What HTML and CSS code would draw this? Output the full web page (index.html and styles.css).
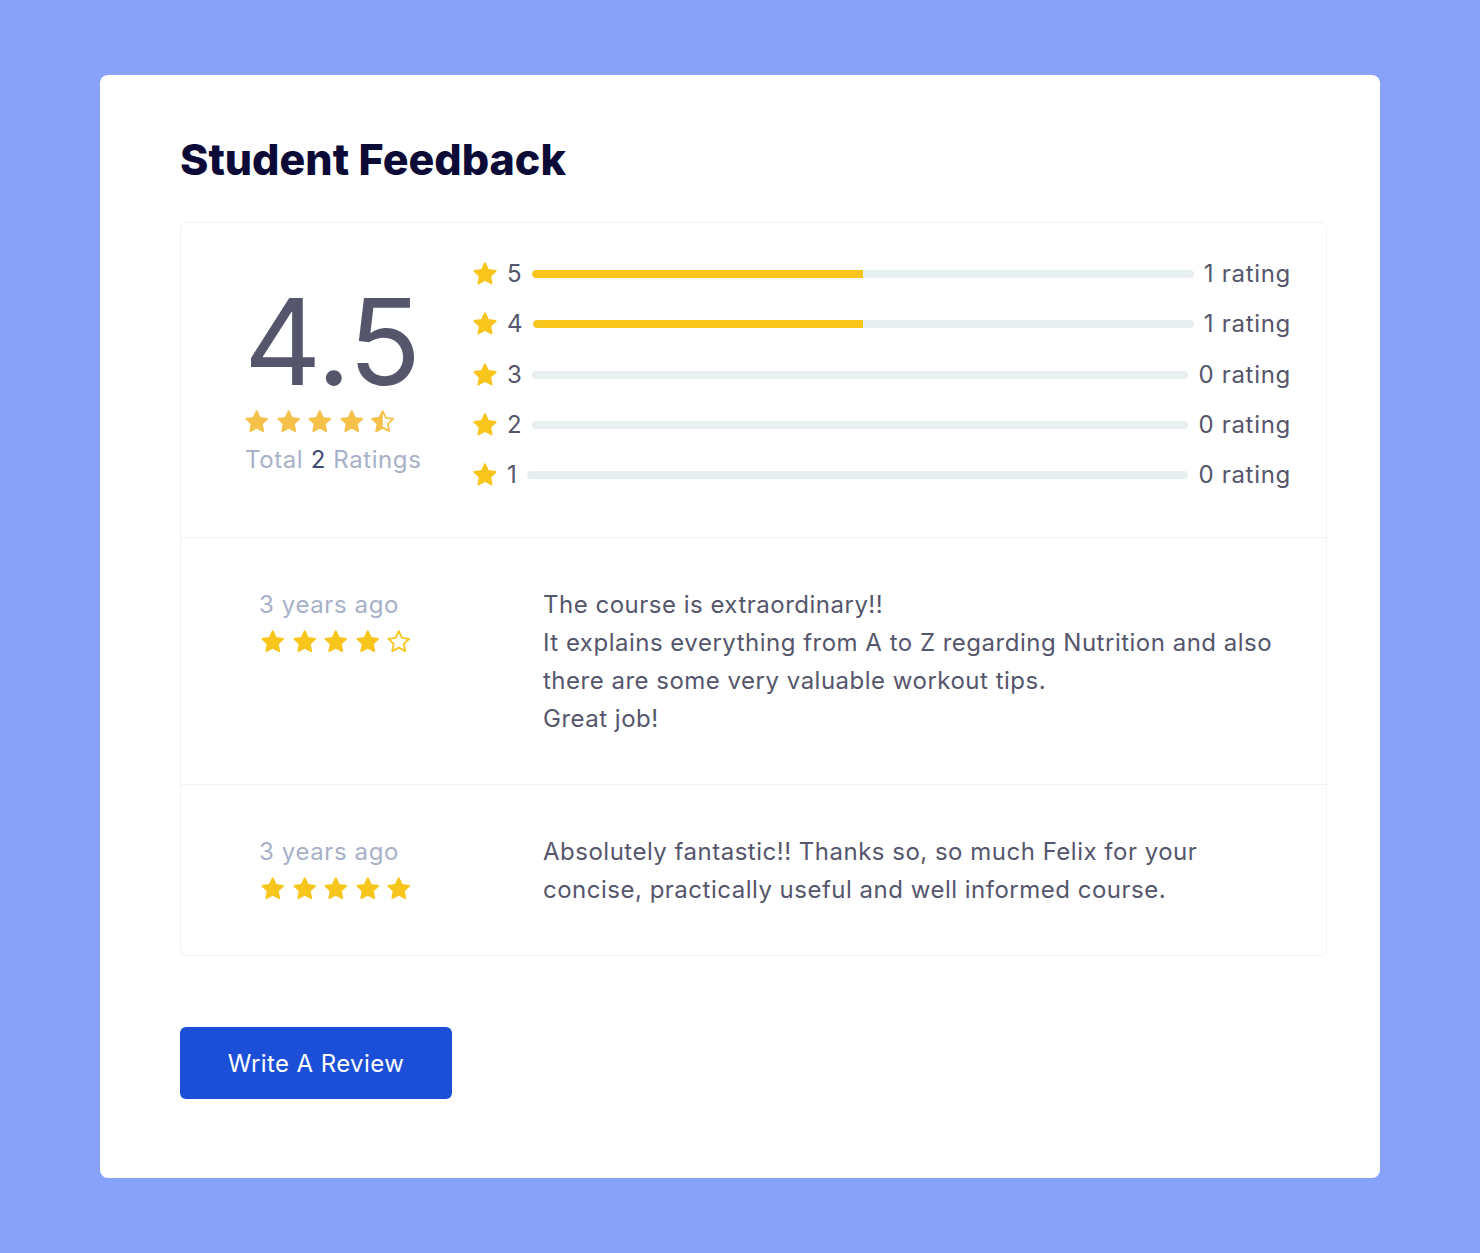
FILE: index.html
```html
<!DOCTYPE html>
<html lang="en">
<head>
<meta charset="utf-8">
<title>Student Feedback</title>
<link rel="stylesheet" href="styles.css">
</head>
<body>
<svg width="0" height="0" class="defs" aria-hidden="true">
  <defs>
    <path id="star" d="M12 2.8l2.75 5.8 6.35.85-4.650 4.4 1.2 6.3L12 17.1l-5.65 3.05 1.2-6.3L2.9 9.45l6.35-.85z"/>
    <clipPath id="half"><rect x="0" y="0" width="12" height="24"/></clipPath>
  </defs>
</svg>
<main class="card">
  <h1 class="title">Student Feedback</h1>
  <section class="box">
    <div class="summary">
      <div class="avg">
        <div class="avg-num">4.5</div>
        <div class="stars stars-soft">
          <svg class="star" viewBox="0 0 24 24"><use href="#star" class="full"/></svg>
          <svg class="star" viewBox="0 0 24 24"><use href="#star" class="full"/></svg>
          <svg class="star" viewBox="0 0 24 24"><use href="#star" class="full"/></svg>
          <svg class="star" viewBox="0 0 24 24"><use href="#star" class="full"/></svg>
          <svg class="star" viewBox="0 0 24 24"><use href="#star" class="empty"/><use href="#star" class="full" clip-path="url(#half)"/></svg>
        </div>
        <div class="total">Total <span class="total-num">2</span> Ratings</div>
      </div>
      <div class="bars">
        <div class="bar-row">
          <svg class="row-star" viewBox="0 0 24 24"><use href="#star" class="full"/></svg>
          <span class="row-num">5</span>
          <div class="track"><div class="fill" style="width:50%"></div></div>
          <span class="row-label">1 rating</span>
        </div>
        <div class="bar-row">
          <svg class="row-star" viewBox="0 0 24 24"><use href="#star" class="full"/></svg>
          <span class="row-num">4</span>
          <div class="track"><div class="fill" style="width:50%"></div></div>
          <span class="row-label">1 rating</span>
        </div>
        <div class="bar-row">
          <svg class="row-star" viewBox="0 0 24 24"><use href="#star" class="full"/></svg>
          <span class="row-num">3</span>
          <div class="track"><div class="fill" style="width:0%"></div></div>
          <span class="row-label">0 rating</span>
        </div>
        <div class="bar-row">
          <svg class="row-star" viewBox="0 0 24 24"><use href="#star" class="full"/></svg>
          <span class="row-num">2</span>
          <div class="track"><div class="fill" style="width:0%"></div></div>
          <span class="row-label">0 rating</span>
        </div>
        <div class="bar-row">
          <svg class="row-star" viewBox="0 0 24 24"><use href="#star" class="full"/></svg>
          <span class="row-num">1</span>
          <div class="track"><div class="fill" style="width:0%"></div></div>
          <span class="row-label">0 rating</span>
        </div>
      </div>
    </div>

    <div class="review">
      <div class="review-meta">
        <div class="review-date">3 years ago</div>
        <div class="stars">
          <svg class="star" viewBox="0 0 24 24"><use href="#star" class="full"/></svg>
          <svg class="star" viewBox="0 0 24 24"><use href="#star" class="full"/></svg>
          <svg class="star" viewBox="0 0 24 24"><use href="#star" class="full"/></svg>
          <svg class="star" viewBox="0 0 24 24"><use href="#star" class="full"/></svg>
          <svg class="star" viewBox="0 0 24 24"><use href="#star" class="empty"/></svg>
        </div>
      </div>
      <div class="review-text">The course is extraordinary!!<br>It explains everything from A to Z regarding Nutrition and also there are some very valuable workout tips.<br>Great job!</div>
    </div>

    <div class="review">
      <div class="review-meta">
        <div class="review-date">3 years ago</div>
        <div class="stars">
          <svg class="star" viewBox="0 0 24 24"><use href="#star" class="full"/></svg>
          <svg class="star" viewBox="0 0 24 24"><use href="#star" class="full"/></svg>
          <svg class="star" viewBox="0 0 24 24"><use href="#star" class="full"/></svg>
          <svg class="star" viewBox="0 0 24 24"><use href="#star" class="full"/></svg>
          <svg class="star" viewBox="0 0 24 24"><use href="#star" class="full"/></svg>
        </div>
      </div>
      <div class="review-text">Absolutely fantastic!! Thanks so, so much Felix for your concise, practically useful and well informed course.</div>
    </div>
  </section>
  <button class="btn" type="button">Write A Review</button>
</main>
</body>
</html>
```
FILE: styles.css
```css
* { box-sizing: border-box; }

html, body {
  margin: 0;
  padding: 0;
}

body {
  background: #87a2f8;
  font-family: Inter, "Noto Sans", sans-serif;
  padding: 75px 100px;
  min-height: 1253px;
}

.defs {
  position: absolute;
  width: 0;
  height: 0;
  overflow: hidden;
}

.card {
  background: #fff;
  border-radius: 8px;
  padding: 58px 53px 79px 80px;
  height: 1103px;
}

.title {
  margin: 0;
  font-size: 43px;
  line-height: 52px;
  font-weight: 800;
  letter-spacing: 0;
  color: #0c0a36;
}

.box {
  margin-top: 37px;
  border: 1px solid #f2f3f5;
  border-radius: 6px;
}

.full { fill: #f8c51c; stroke: #f8c51c; stroke-width: 1.6; stroke-linejoin: round; }
.empty { fill: #fff; stroke: #f8c51c; stroke-width: 1.6; stroke-linejoin: round; }
.stars-soft .full { fill: #f6c14a; stroke: #f6c14a; }
.stars-soft .empty { stroke: #f6c14a; }

.summary {
  display: flex;
  align-items: flex-start;
  padding: 26px 35px 37px 64px;
  border-bottom: 1px solid #f2f3f5;
}

.avg {
  width: 228px;
  flex: none;
  margin-top: 33px;
  display: flex;
  flex-direction: column;
  align-items: flex-start;
}

.avg-num {
  font-size: 120px;
  line-height: 120px;
  font-weight: 400;
  color: #55566c;
  letter-spacing: -1px;
  margin-left: -1px;
}

.stars {
  display: flex;
  gap: 4px;
  margin-top: 6px;
  margin-left: -2px;
}

.star {
  width: 27.5px;
  height: 27.5px;
  display: block;
}

.total {
  margin-top: 10px;
  font-size: 24px;
  line-height: 28px;
  letter-spacing: 0.6px;
  color: #a7b1c8;
}

.total-num { color: #3e4a72; }

.bars {
  flex: 1;
  display: flex;
  flex-direction: column;
}

.bar-row {
  display: flex;
  align-items: center;
  height: 50.3px;
  gap: 10px;
}

.row-star {
  width: 28px;
  height: 28px;
  margin-left: -2px;
  margin-right: -2px;
  flex: none;
  display: block;
}

.row-num {
  font-size: 24px;
  color: #55566c;
  line-height: 30px;
}

.track {
  flex: 1;
  height: 8px;
  border-radius: 4px;
  background: #e8eff1;
  overflow: hidden;
}

.fill {
  height: 100%;
  background: #f8c51c;
  border-radius: 4px 0 0 4px;
}

.row-label {
  font-size: 24px;
  line-height: 30px;
  letter-spacing: 0.7px;
  color: #55566c;
}

.review {
  display: flex;
  align-items: flex-start;
  padding: 48px 48px 46px 80px;
}

.review + .review { border-top: 1px solid #f2f3f5; }

.review-meta {
  width: 283px;
  flex: none;
}

.review-date {
  font-size: 24px;
  line-height: 38px;
  letter-spacing: 0.6px;
  color: #a7b1c8;
  margin-left: -2px;
}

.review-meta .stars { margin-top: 4px; margin-left: -2px; }

.review-text {
  flex: 1;
  font-size: 24px;
  line-height: 38px;
  letter-spacing: 0.5px;
  color: #55566c;
  margin-left: -1px;
}

.btn {
  margin-top: 71px;
  display: block;
  width: 272px;
  height: 72px;
  border: none;
  border-radius: 6px;
  background: #1b4fd8;
  color: #fff;
  font-family: Inter, "Noto Sans", sans-serif;
  font-size: 24px;
  font-weight: 400;
  letter-spacing: 0.4px;
  cursor: pointer;
}
```
